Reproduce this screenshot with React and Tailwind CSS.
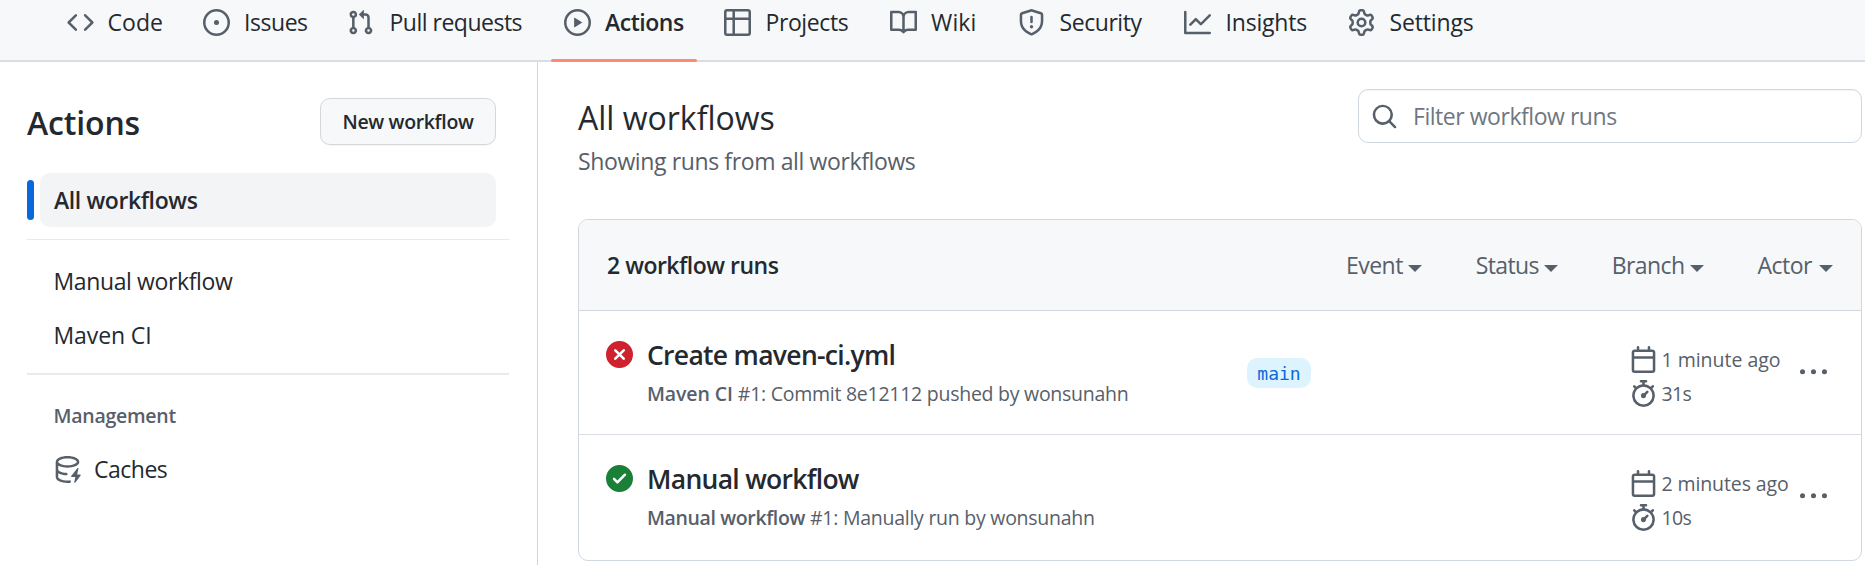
const PATHS = {
  code: 'm11.28 3.22 4.25 4.25a.75.75 0 0 1 0 1.06l-4.25 4.25a.749.749 0 0 1-1.275-.326.749.749 0 0 1 .215-.734L13.94 8l-3.72-3.72a.749.749 0 0 1 .326-1.275.749.749 0 0 1 .734.215Zm-6.56 0a.751.751 0 0 1 1.042.018.751.751 0 0 1 .018 1.042L2.06 8l3.72 3.72a.749.749 0 0 1-.326 1.275.749.749 0 0 1-.734-.215L.47 8.53a.75.75 0 0 1 0-1.06Z',
  issue: 'M8 9.5a1.5 1.5 0 1 0 0-3 1.5 1.5 0 0 0 0 3ZM8 0a8 8 0 1 1 0 16A8 8 0 0 1 8 0ZM1.5 8a6.5 6.5 0 1 0 13 0 6.5 6.5 0 0 0-13 0Z',
  pull: 'M1.5 3.25a2.25 2.25 0 1 1 3 2.122v5.256a2.251 2.251 0 1 1-1.5 0V5.372A2.25 2.25 0 0 1 1.5 3.25Zm5.677-.177L9.573.677A.25.25 0 0 1 10 .854V2.5h1A2.5 2.5 0 0 1 13.5 5v5.628a2.251 2.251 0 1 1-1.5 0V5a1 1 0 0 0-1-1h-1v1.646a.25.25 0 0 1-.427.177L7.177 3.427a.25.25 0 0 1 0-.354ZM3.75 2.5a.75.75 0 1 0 0 1.5.75.75 0 0 0 0-1.5Zm0 9.5a.75.75 0 1 0 0 1.5.75.75 0 0 0 0-1.5Zm8.25.75a.75.75 0 1 0 1.5 0 .75.75 0 0 0-1.5 0Z',
  play: 'M8 0a8 8 0 1 1 0 16A8 8 0 0 1 8 0ZM1.5 8a6.5 6.5 0 1 0 13 0 6.5 6.5 0 0 0-13 0Zm4.879-2.773 4.264 2.559a.25.25 0 0 1 0 .428l-4.264 2.559A.25.25 0 0 1 6 10.559V5.442a.25.25 0 0 1 .379-.215Z',
  table: 'M0 1.75C0 .784.784 0 1.75 0h12.5C15.216 0 16 .784 16 1.75v12.5A1.75 1.75 0 0 1 14.25 16H1.75A1.75 1.75 0 0 1 0 14.25ZM6.5 6.5v8h7.75a.25.25 0 0 0 .25-.25V6.5Zm8-1.5V1.75a.25.25 0 0 0-.25-.25H6.5V5Zm-13 1.5v7.75c0 .138.112.25.25.25H5v-8ZM5 5V1.5H1.75a.25.25 0 0 0-.25.25V5Z',
  book: 'M0 1.75A.75.75 0 0 1 .75 1h4.253c1.227 0 2.317.59 3 1.501A3.743 3.743 0 0 1 11.006 1h4.245a.75.75 0 0 1 .75.75v10.5a.75.75 0 0 1-.75.75h-4.507a2.25 2.25 0 0 0-1.591.659l-.622.621a.75.75 0 0 1-1.06 0l-.622-.621A2.25 2.25 0 0 0 5.258 13H.75a.75.75 0 0 1-.75-.75Zm7.251 10.324.004-5.073-.002-2.253A2.25 2.25 0 0 0 5.003 2.5H1.5v9h3.757a3.75 3.75 0 0 1 1.994.574ZM8.755 4.75l-.004 7.322a3.752 3.752 0 0 1 1.992-.572H14.5v-9h-3.495a2.25 2.25 0 0 0-2.25 2.25Z',
  shield: 'M7.467.133a1.748 1.748 0 0 1 1.066 0l5.25 1.68A1.75 1.75 0 0 1 15 3.48V7c0 1.566-.32 3.182-1.303 4.682-.983 1.498-2.585 2.813-5.032 3.855a1.697 1.697 0 0 1-1.33 0c-2.447-1.042-4.049-2.357-5.032-3.855C1.32 10.182 1 8.566 1 7V3.48a1.75 1.75 0 0 1 1.217-1.667Zm.61 1.429a.25.25 0 0 0-.153 0l-5.25 1.68a.25.25 0 0 0-.174.238V7c0 1.358.275 2.666 1.057 3.86.784 1.194 2.121 2.34 4.366 3.297a.196.196 0 0 0 .154 0c2.245-.956 3.582-2.104 4.366-3.298C13.225 9.666 13.5 8.36 13.5 7V3.48a.251.251 0 0 0-.174-.237l-5.25-1.68ZM8.75 4.75v3a.75.75 0 0 1-1.5 0v-3a.75.75 0 0 1 1.5 0ZM9 10.5a1 1 0 1 1-2 0 1 1 0 0 1 2 0Z',
  graph: 'M1.5 1.75V13.5h13.75a.75.75 0 0 1 0 1.5H.75a.75.75 0 0 1-.75-.75V1.75a.75.75 0 0 1 1.5 0Zm14.28 2.53-5.25 5.25a.75.75 0 0 1-1.06 0L7 7.06 4.28 9.78a.751.751 0 0 1-1.042-.018.751.751 0 0 1-.018-1.042l3.25-3.25a.75.75 0 0 1 1.06 0L10 7.94l4.72-4.72a.751.751 0 0 1 1.042.018.751.751 0 0 1 .018 1.042Z',
  gear: 'M8 0a8.2 8.2 0 0 1 .701.031C9.444.095 9.99.645 10.16 1.29l.288 1.107c.018.066.079.158.212.224.231.114.454.243.668.386.123.082.233.09.299.071l1.103-.303c.644-.176 1.392.021 1.82.63.27.385.506.792.704 1.218.315.675.111 1.422-.364 1.891l-.814.806c-.049.048-.098.147-.088.294.016.257.016.515 0 .772-.01.147.038.246.088.294l.814.806c.475.469.679 1.216.364 1.891a7.977 7.977 0 0 1-.704 1.217c-.428.61-1.176.807-1.82.63l-1.102-.302c-.067-.019-.177-.011-.3.071a5.909 5.909 0 0 1-.668.386c-.133.066-.194.158-.211.224l-.29 1.106c-.168.646-.715 1.196-1.458 1.26a8.006 8.006 0 0 1-1.402 0c-.743-.064-1.289-.614-1.458-1.26l-.289-1.106c-.018-.066-.079-.158-.212-.224a5.738 5.738 0 0 1-.668-.386c-.123-.082-.233-.09-.299-.071l-1.103.303c-.644.176-1.392-.021-1.82-.63a8.12 8.12 0 0 1-.704-1.218c-.315-.675-.111-1.422.363-1.891l.815-.806c.05-.048.098-.147.088-.294a6.214 6.214 0 0 1 0-.772c.01-.147-.038-.246-.088-.294l-.815-.806C.635 6.045.431 5.298.746 4.623a7.92 7.92 0 0 1 .704-1.217c.428-.61 1.176-.807 1.82-.63l1.102.302c.067.019.177.011.3-.071.214-.143.437-.272.668-.386.133-.066.194-.158.211-.224l.29-1.106C6.009.645 6.556.095 7.299.03 7.53.01 7.764 0 8 0Zm-.571 1.525c-.036.003-.108.036-.137.146l-.289 1.105c-.147.561-.549.967-.998 1.189-.173.086-.34.183-.5.29-.417.278-.97.423-1.529.27l-1.103-.303c-.109-.03-.175.016-.195.045-.22.312-.412.644-.573.99-.014.031-.021.11.059.19l.815.806c.411.406.562.957.53 1.456a4.709 4.709 0 0 0 0 .582c.032.499-.119 1.05-.53 1.456l-.815.806c-.081.08-.073.159-.059.19.162.346.353.677.573.989.02.03.085.076.195.046l1.102-.303c.56-.153 1.113-.008 1.53.27.161.107.328.204.501.29.447.222.85.629.997 1.189l.289 1.105c.029.109.101.143.137.146a6.6 6.6 0 0 0 1.142 0c.036-.003.108-.036.137-.146l.289-1.105c.147-.561.549-.967.998-1.189.173-.086.34-.183.5-.29.417-.278.97-.423 1.529-.27l1.103.303c.109.029.175-.016.195-.045.22-.313.411-.644.573-.99.014-.031.021-.11-.059-.19l-.815-.806c-.411-.406-.562-.957-.53-1.456a4.709 4.709 0 0 0 0-.582c-.032-.499.119-1.05.53-1.456l.815-.806c.081-.08.073-.159.059-.19a6.464 6.464 0 0 0-.573-.989c-.02-.03-.085-.076-.195-.046l-1.102.303c-.56.153-1.113.008-1.53-.27a4.44 4.44 0 0 0-.501-.29c-.447-.222-.85-.629-.997-1.189l-.289-1.105c-.029-.11-.101-.143-.137-.146a6.6 6.6 0 0 0-1.142 0ZM11 8a3 3 0 1 1-6 0 3 3 0 0 1 6 0ZM9.5 8a1.5 1.5 0 1 0-3.001.001A1.5 1.5 0 0 0 9.5 8Z',
  search: 'M10.68 11.74a6 6 0 0 1-7.922-8.982 6 6 0 0 1 8.982 7.922l3.04 3.04a.749.749 0 0 1-.326 1.275.749.749 0 0 1-.734-.215ZM11.5 7a4.499 4.499 0 1 0-8.997 0A4.499 4.499 0 0 0 11.5 7Z',
  calendar: 'M4.75 0a.75.75 0 0 1 .75.75V2h5V.75a.75.75 0 0 1 1.5 0V2h1.25c.966 0 1.75.784 1.75 1.75v10.5A1.75 1.75 0 0 1 13.25 16H2.75A1.75 1.75 0 0 1 1 14.25V3.75C1 2.784 1.784 2 2.75 2H4V.75A.75.75 0 0 1 4.75 0ZM2.5 7.5v6.75c0 .138.112.25.25.25h10.5a.25.25 0 0 0 .25-.25V7.5Zm10.75-4H2.75a.25.25 0 0 0-.25.25V6h11V3.75a.25.25 0 0 0-.25-.25Z',
  stopwatch: 'M5.75.75A.75.75 0 0 1 6.5 0h3a.75.75 0 0 1 0 1.5h-.75v1l-.001.041a6.724 6.724 0 0 1 3.464 1.435l.007-.006.75-.75a.749.749 0 0 1 1.275.326.749.749 0 0 1-.215.734l-.75.75-.006.007a6.75 6.75 0 1 1-10.548 0L2.72 5.03l-.75-.75a.751.751 0 0 1 .018-1.042.751.751 0 0 1 1.042-.018l.75.75.007.006A6.72 6.72 0 0 1 7.25 2.541V1.5H6.5a.75.75 0 0 1-.75-.75ZM8 14.5a5.25 5.25 0 1 0-.001-10.501A5.25 5.25 0 0 0 8 14.5Zm.389-6.7 1.33-1.33a.75.75 0 1 1 1.061 1.06L9.45 8.861A1.503 1.503 0 0 1 8 10.75a1.499 1.499 0 1 1 .389-2.95Z',
  failed: 'M2.343 13.657A8 8 0 1 1 13.658 2.343 8 8 0 0 1 2.343 13.657ZM6.03 4.97a.751.751 0 0 0-1.042.018.751.751 0 0 0-.018 1.042L6.94 8 4.97 9.97a.749.749 0 0 0 .326 1.275.749.749 0 0 0 .734-.215L8 9.06l1.97 1.97a.749.749 0 0 0 1.275-.326.749.749 0 0 0-.215-.734L9.06 8l1.97-1.97a.749.749 0 0 0-.326-1.275.749.749 0 0 0-.734.215L8 6.94Z',
  passed: 'M8 16A8 8 0 1 1 8 0a8 8 0 0 1 0 16Zm3.78-9.72a.751.751 0 0 0-.018-1.042.751.751 0 0 0-1.042-.018L6.75 9.19 5.28 7.72a.751.751 0 0 0-1.042.018.751.751 0 0 0-.018 1.042l2 2a.75.75 0 0 0 1.06 0Z',
  cache: 'M2.5 5.724V8c0 .248.238.7 1.169 1.159.874.43 2.144.745 3.62.822a.75.75 0 1 1-.078 1.498c-1.622-.085-3.102-.432-4.204-.975a5.565 5.565 0 0 1-.507-.28V12.5c0 .133.058.318.282.551.227.237.591.483 1.101.707 1.015.447 2.47.742 4.117.742.406 0 .802-.018 1.183-.052a.751.751 0 1 1 .134 1.494C8.89 15.98 8.45 16 8 16c-1.805 0-3.475-.32-4.721-.869-.623-.274-1.173-.619-1.579-1.041-.408-.425-.7-.964-.7-1.59v-9c0-.626.292-1.165.7-1.591.406-.42.956-.766 1.579-1.04C4.525.32 6.195 0 8 0c1.806 0 3.476.32 4.721.869.623.274 1.173.619 1.579 1.041.408.425.7.964.7 1.59 0 .626-.292 1.165-.7 1.591-.406.42-.956.766-1.578 1.04C11.475 6.68 9.805 7 8 7c-1.805 0-3.475-.32-4.721-.869a6.15 6.15 0 0 1-.779-.407Zm0-2.224c0 .133.058.318.282.551.227.237.591.483 1.101.707C4.898 5.205 6.353 5.5 8 5.5c1.646 0 3.101-.295 4.118-.742.508-.224.873-.471 1.1-.708.224-.232.282-.417.282-.55 0-.133-.058-.318-.282-.551-.227-.237-.591-.483-1.101-.707C11.102 1.795 9.647 1.5 8 1.5c-1.646 0-3.101.295-4.118.742-.508.224-.873.471-1.1.708-.224.232-.282.417-.282.55ZM14.49 7.582a.375.375 0 0 0-.66-.313l-3.625 4.625a.375.375 0 0 0 .295.606h2.127l-.619 2.922a.375.375 0 0 0 .666.304l3.125-4.125A.375.375 0 0 0 15.5 11h-1.778l.769-3.418Z',
  kebab: 'M8 9a1.5 1.5 0 1 0 0-3 1.5 1.5 0 0 0 0 3ZM1.5 9a1.5 1.5 0 1 0 0-3 1.5 1.5 0 0 0 0 3Zm13 0a1.5 1.5 0 1 0 0-3 1.5 1.5 0 0 0 0 3Z',
};

function Icon({ name, className = 'text-[#57606a]' }) {
  return (
    <svg viewBox="0 0 16 16" fill="currentColor" className={`size-[27px] shrink-0 ${className}`} aria-hidden="true">
      <path d={PATHS[name]} />
    </svg>
  );
}

const TABS = [
  { icon: 'code', label: 'Code', box: 'w-[135.5px] gap-[13.5px]', text: 'tracking-[0.03px]' },
  { icon: 'issue', label: 'Issues', box: 'w-[144px] gap-[14.5px]', text: 'tracking-[-0.45px]' },
  { icon: 'pull', label: 'Pull requests', box: 'w-[217px] gap-[16px]', text: 'tracking-[-0.5px]' },
  { icon: 'play', label: 'Actions', box: 'w-[160.5px] gap-[14.5px]', text: 'font-semibold tracking-[-0.46px]', active: true },
  { icon: 'table', label: 'Projects', box: 'w-[165.5px] gap-[14.5px]', text: 'tracking-[-0.4px]' },
  { icon: 'book', label: 'Wiki', box: 'w-[128.5px] gap-[14.5px]', text: 'tracking-[0.16px]' },
  { icon: 'shield', label: 'Security', box: 'w-[166px] gap-[14.5px]', text: 'tracking-[-0.44px]' },
  { icon: 'graph', label: 'Insights', box: 'w-[163.5px] gap-[14.5px]', text: 'tracking-[-0.2px]' },
  { icon: 'gear', label: 'Settings', box: 'w-[140px] gap-[15px]', text: 'tracking-[-0.15px]' },
];

const FILTERS = [
  { label: 'Event', box: 'w-[76px]', text: 'tracking-[-0.5px]' },
  { label: 'Status', box: 'w-[82.5px]', text: 'tracking-[-0.58px]' },
  { label: 'Branch', box: 'w-[92px]', text: 'tracking-[-0.6px]' },
  { label: 'Actor', box: 'w-[75.5px]', text: 'tracking-[-0.52px]' },
];

const RUNS = [
  {
    status: 'failed',
    color: 'text-[#cf222e]',
    title: 'Create maven-ci.yml',
    workflow: 'Maven CI',
    workflowText: 'tracking-[-0.11px]',
    detail: '#1: Commit 8e12112 pushed by wonsunahn',
    branch: 'main',
    when: '1 minute ago',
    whenText: 'tracking-[-0.02px]',
    took: '31s',
  },
  {
    status: 'passed',
    color: 'text-[#1a7f37]',
    title: 'Manual workflow',
    workflow: 'Manual workflow',
    workflowText: 'tracking-[-0.37px]',
    detail: '#1: Manually run by wonsunahn',
    when: '2 minutes ago',
    whenText: 'tracking-[-0.11px]',
    took: '10s',
  },
];

function RepoNav() {
  return (
    <nav className="flex h-[62px] shrink-0 border-b-2 border-[#d8dee4] bg-[#f6f8fa] pl-[67px]">
      {TABS.map((tab) => (
        <a key={tab.label} className={`relative flex h-[45px] shrink-0 items-center ${tab.box}`}>
          <Icon name={tab.icon} />
          <span className={`text-[23px] whitespace-nowrap ${tab.text}`}>{tab.label}</span>
          {tab.active && <span className="absolute -bottom-[17px] -left-[12.5px] h-[3px] w-[146px] rounded-full bg-[#fd8c73]" />}
        </a>
      ))}
    </nav>
  );
}

function Sidebar() {
  return (
    <aside className="w-[538px] shrink-0 border-r border-[#d0d7de] pt-9 pl-[27px]">
      <div className="flex h-[47px] w-[469px] items-center justify-between">
        <h2 className="pt-0.5 text-[32px] leading-[47px] font-semibold tracking-[-0.15px]">Actions</h2>
        <button className="flex h-[47px] w-[176px] items-center justify-center rounded-[10px] border border-[#d5d8da] bg-[#f6f8fa] text-[19.5px] font-semibold tracking-[-0.34px] text-[#24292f] shadow-[0_1px_0_rgba(27,31,36,0.04)]">
          New workflow
        </button>
      </div>
      <div className="mt-7 flex items-center gap-1.5">
        <span className="h-10 w-[7px] rounded-full bg-[#0969da]" />
        <a className="flex h-[54px] w-[456px] items-center rounded-[10px] bg-[#f3f4f6] pl-3.5 text-[23px] font-semibold tracking-[-0.4px]">
          All workflows
        </a>
      </div>
      <div className="mt-3 h-px w-[482px] bg-[#e8eaed]" />
      <div className="mt-3.5 pl-[26.5px] text-[23px] leading-[54px]">
        <div className="tracking-[-0.38px]">Manual workflow</div>
        <div className="tracking-[-0.1px]">Maven CI</div>
      </div>
      <div className="mt-[11px] h-0.5 w-[482px] bg-[#e8eaed]" />
      <h3 className="mt-[26px] pl-[26.5px] text-[19.5px] leading-[30px] font-semibold tracking-[-0.25px] text-[#57606a]">
        Management
      </h3>
      <a className="mt-[11px] flex h-[54px] items-center gap-[13px] pl-[27px]">
        <Icon name="cache" />
        <span className="text-[23px] tracking-[-0.5px]">Caches</span>
      </a>
    </aside>
  );
}

function Run({ run, first }) {
  return (
    <div className={`flex pl-[27px] ${first ? 'h-[124px] border-b border-[#d8dee4]' : 'h-[125px]'}`}>
      <div className="flex w-[641px] shrink-0 gap-[14px]">
        <Icon name={run.status} className={`mt-[30px] ${run.color}`} />
        <div className="pt-[26px]">
          <div className="text-[26.5px] leading-9 font-semibold tracking-[-0.7px]">{run.title}</div>
          <div className="mt-1.5 flex gap-[5px] text-[19.5px] leading-[30px] tracking-[-0.26px] text-[#57606a]">
            <span className={`font-semibold ${run.workflowText}`}>{run.workflow}</span>
            <span>{run.detail}</span>
          </div>
        </div>
      </div>
      <div className="w-[382.5px] shrink-0 pt-[47px]">
        {run.branch && (
          <span className="flex h-[30px] w-[64px] items-center justify-center rounded-[10px] bg-[#ddf4ff] pt-px font-['DejaVu_Sans_Mono',monospace] text-[18px] text-[#0969da]">
            {run.branch}
          </span>
        )}
      </div>
      <div className="w-[170px] shrink-0 pt-[31px] text-[19.5px] text-[#57606a]">
        <div className="flex h-[34px] items-center gap-[5px]">
          <Icon name="calendar" />
          <span className={`pt-0.5 ${run.whenText}`}>{run.when}</span>
        </div>
        <div className="flex h-[34px] items-center gap-[5px]">
          <Icon name="stopwatch" />
          <span className="pt-0.5 tracking-[-0.7px]">{run.took}</span>
        </div>
      </div>
      <Icon name="kebab" className="mt-12 text-[#57606a]" />
    </div>
  );
}

function Main() {
  return (
    <main className="w-[1324px] shrink-0 pt-[27px] pl-10">
      <div className="flex h-[87px] items-start justify-between">
        <div className="pt-[9px]">
          <h1 className="text-[32px] leading-10">All workflows</h1>
          <p className="mt-2 text-[23px] leading-[30px] tracking-[-0.38px] text-[#57606a]">
            Showing runs from all workflows
          </p>
        </div>
        <label className="flex h-[54px] w-[504px] items-center gap-[15px] rounded-[10px] border border-[#d0d7de] pl-3 shadow-[inset_0_1px_0_rgba(208,215,222,0.2)]">
          <Icon name="search" />
          <span className="text-[23px] tracking-[-0.46px] text-[#6e7781]">Filter workflow runs</span>
        </label>
      </div>
      <section className="mt-[43px] overflow-hidden rounded-[10px] border border-[#d0d7de]">
        <header className="flex h-[91px] items-center justify-between border-b border-[#d0d7de] bg-[#f6f8fa] pr-7 pl-7">
          <strong className="text-[23px] font-semibold tracking-[-0.5px]">2 workflow runs</strong>
          <div className="flex gap-[53.7px] text-[23px] text-[#57606a]">
            {FILTERS.map((f) => (
              <span key={f.label} className={`flex items-center justify-between ${f.box}`}>
                <span className={f.text}>{f.label}</span>
                <span className="mt-1.5 border-x-[7px] border-t-[7px] border-x-transparent border-t-[#57606a]" />
              </span>
            ))}
          </div>
        </header>
        <Run run={RUNS[0]} first />
        <Run run={RUNS[1]} />
      </section>
    </main>
  );
}

export default function App() {
  return (
    <div className="flex h-[565px] w-[1865px] flex-col overflow-hidden bg-white font-['Open_Sans','Noto_Sans',sans-serif] text-[#24292f]">
      <RepoNav />
      <div className="flex flex-1">
        <Sidebar />
        <Main />
      </div>
    </div>
  );
}
